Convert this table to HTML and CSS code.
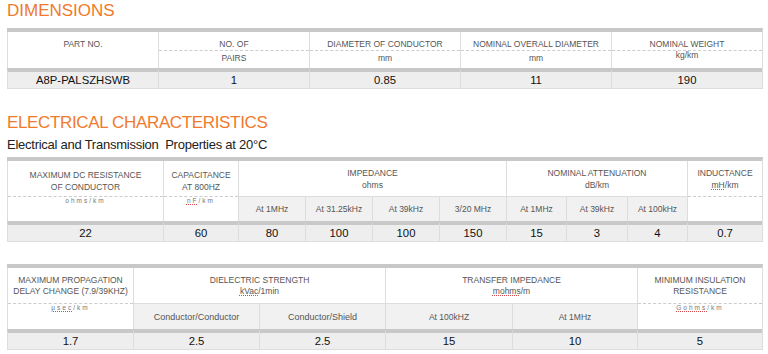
FILE: index.html
```html
<!DOCTYPE html>
<html lang="en">
<head>
<meta charset="utf-8">
<title>Cable Specifications</title>
<link rel="stylesheet" href="styles.css">
</head>
<body>
<main class="page">
  <h2 class="title">DIMENSIONS</h2>
  <div class="spec spec-dim">
    <div class="hd"><div class="t t-dim">PART NO.</div></div>
    <div class="hd"><div class="t t-dim">NO. OF</div><div class="u">PAIRS</div></div>
    <div class="hd"><div class="t t-dim">DIAMETER OF CONDUCTOR</div><div class="u">mm</div></div>
    <div class="hd"><div class="t t-dim">NOMINAL OVERALL DIAMETER</div><div class="u">mm</div></div>
    <div class="hd"><div class="t t-dim">NOMINAL WEIGHT</div><div class="u u-up">kg/km</div></div>
    <div class="dv">A8P-PALSZHSWB</div>
    <div class="dv">1</div>
    <div class="dv">0.85</div>
    <div class="dv">11</div>
    <div class="dv">190</div>
  </div>

  <h2 class="title title-elec">ELECTRICAL CHARACTERISTICS</h2>
  <p class="subtitle">Electrical and Transmission  Properties at 20°C</p>
  <div class="spec spec-elec">
    <div class="hd rs"><div class="t t-tall t-low">MAXIMUM DC RESISTANCE<br>OF CONDUCTOR</div><div class="u tiny">ohms/km</div></div>
    <div class="hd rs"><div class="t t-tall t-low">CAPACITANCE<br>AT 800HZ</div><div class="u tiny"><span class="sp">nF</span>/km</div></div>
    <div class="hd cs4"><div class="t">IMPEDANCE<br>ohms</div></div>
    <div class="hd cs3"><div class="t">NOMINAL ATTENUATION<br>dB/km</div></div>
    <div class="hd rs"><div class="t t-tall">INDUCTANCE<br><span class="sp">mH</span>/km</div><div class="u"></div></div>
    <div class="sub">At 1MHz</div>
    <div class="sub">At 31.25kHz</div>
    <div class="sub">At 39kHz</div>
    <div class="sub">3/20 MHz</div>
    <div class="sub">At 1MHz</div>
    <div class="sub">At 39kHz</div>
    <div class="sub">At 100kHz</div>
    <div class="dv">22</div>
    <div class="dv">60</div>
    <div class="dv">80</div>
    <div class="dv">100</div>
    <div class="dv">100</div>
    <div class="dv">150</div>
    <div class="dv">15</div>
    <div class="dv">3</div>
    <div class="dv">4</div>
    <div class="dv">0.7</div>
  </div>

  <div class="spec spec-prop">
    <div class="hd rs"><div class="t t-tall t-prop">MAXIMUM PROPAGATION<br>DELAY CHANGE (7.9/39KHZ)</div><div class="u tiny"><span class="sp">μsec</span>/km</div></div>
    <div class="hd cs2"><div class="t t-prop">DIELECTRIC STRENGTH<br><span class="sp">kVac</span>/1min</div></div>
    <div class="hd cs2"><div class="t t-prop">TRANSFER IMPEDANCE<br><span class="sp">mohms</span>/m</div></div>
    <div class="hd rs"><div class="t t-tall t-prop">MINIMUM INSULATION<br>RESISTANCE</div><div class="u tiny"><span class="sp">Gohms</span>/km</div></div>
    <div class="sub sub-lg">Conductor/Conductor</div>
    <div class="sub sub-lg">Conductor/Shield</div>
    <div class="sub">At 100kHZ</div>
    <div class="sub">At 1MHz</div>
    <div class="dv">1.7</div>
    <div class="dv">2.5</div>
    <div class="dv">2.5</div>
    <div class="dv">15</div>
    <div class="dv">10</div>
    <div class="dv">5</div>
  </div>
</main>
</body>
</html>
```

FILE: styles.css
```css
* {
  box-sizing: border-box;
}

body {
  margin: 0;
  background: #fff;
  font-family: "Liberation Sans", Arial, sans-serif;
  color: #222;
}

.page {
  padding: 1px 5px 0 7px;
}

.title {
  margin: 0;
  font-size: 17px;
  line-height: 20px;
  font-weight: normal;
  color: #f07a2b;
}

.title-elec {
  margin-top: 24px;
  letter-spacing: -0.35px;
}

.subtitle {
  margin: 3px 0 0;
  font-size: 13px;
  line-height: 18px;
  letter-spacing: -0.25px;
  color: #222;
  white-space: pre;
}

.spec {
  display: grid;
  width: 756px;
  border-top: 4px solid #c8c8c8;
  border-right: 1px solid #ddd;
  border-bottom: 1px solid #ddd;
  text-align: center;
}

.spec-dim {
  margin-top: 7px;
  grid-template-columns: repeat(5, 151px);
  grid-template-rows: 36px 20px;
}

.spec-elec {
  margin-top: 3px;
  grid-template-columns: 156px 75px 67px 67px 67px 67px 60px 61px 60px 75px;
  grid-template-rows: 35px 25px 20px;
}

.spec-prop {
  margin-top: 22px;
  grid-template-columns: 126px 126px 126px 127px 125px 125px;
  grid-template-rows: 35px 26px 20px;
}

.spec > div {
  border-left: 1px solid #ddd;
}

.rs {
  grid-row: span 2;
}

.cs2 {
  grid-column: span 2;
}

.cs3 {
  grid-column: span 3;
}

.cs4 {
  grid-column: span 4;
}

.hd {
  background: #fff;
  color: #555;
  font-size: 8.5px;
}

.t {
  padding-top: 6px;
  line-height: 12px;
}

.t-dim {
  height: 18px;
}

.t-tall {
  height: 35px;
}

.t-low {
  padding-top: 8px;
}

.t-prop {
  padding-top: 6.5px;
  line-height: 11px;
}

.u {
  border-top: 1px dashed #ccc;
  line-height: 12px;
  padding-top: 1px;
}

.u-up {
  padding-top: 0;
  line-height: 9px;
}

.tiny {
  font-size: 6.5px;
  line-height: 6px;
  letter-spacing: 2px;
  color: #777;
  padding-top: 1px;
}

.sub {
  display: flex;
  align-items: center;
  justify-content: center;
  background: #f1f1f1;
  border-top: 1px solid #ddd;
  color: #555;
  font-size: 8.5px;
}

.sub-lg {
  font-size: 9px;
}

.dv {
  border-top: 4px solid #c8c8c8;
  background: #eee;
  font-size: 11.3px;
  line-height: 16px;
  color: #111;
}

.sp {
  text-decoration: underline dotted #d84a4a;
  text-decoration-thickness: 1px;
  text-underline-offset: 1px;
}
```
